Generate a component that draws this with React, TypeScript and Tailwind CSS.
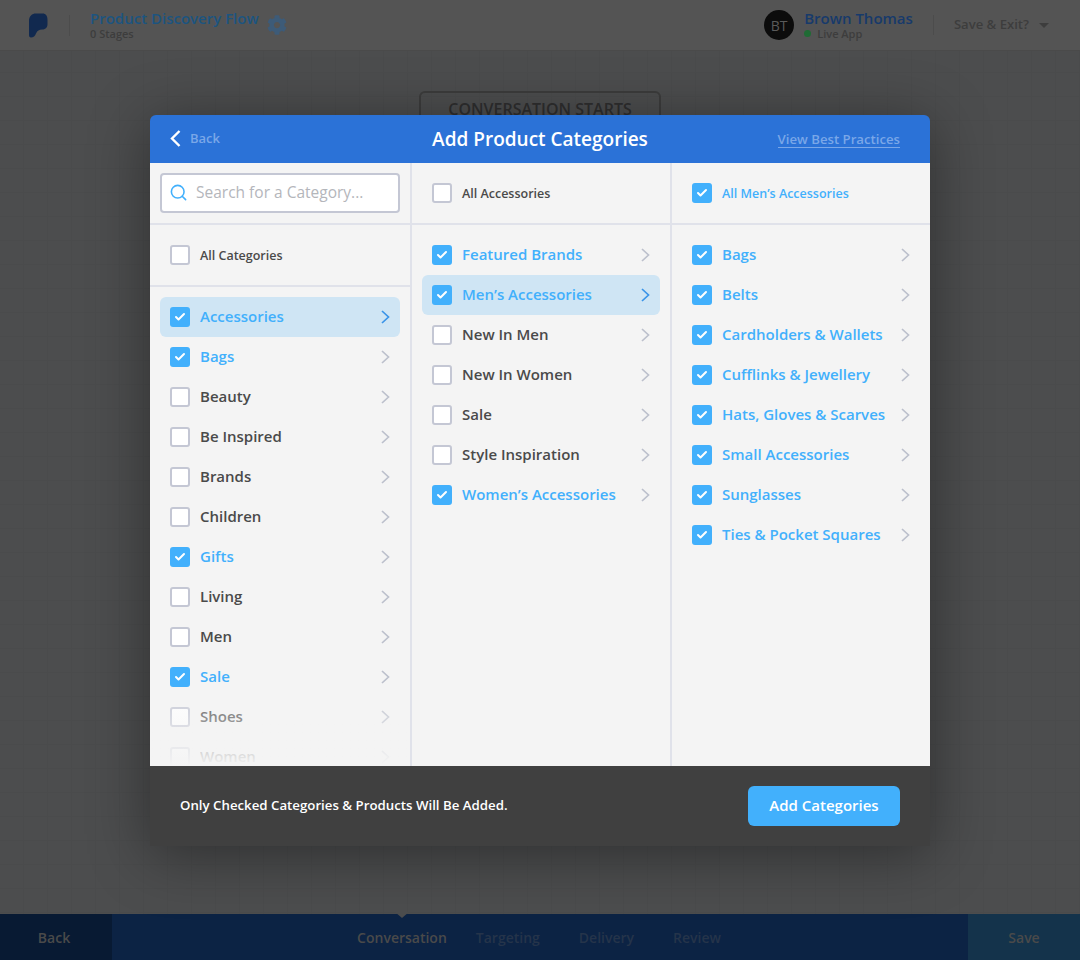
import { Check, Search } from "lucide-react";
import { FaCog } from "react-icons/fa";

const CATEGORIES = [
  { label: "Accessories", checked: true, active: true },
  { label: "Bags", checked: true },
  { label: "Beauty" },
  { label: "Be Inspired" },
  { label: "Brands" },
  { label: "Children" },
  { label: "Gifts", checked: true },
  { label: "Living" },
  { label: "Men" },
  { label: "Sale", checked: true },
  { label: "Shoes" },
  { label: "Women" },
];

const SUB_CATEGORIES = [
  { label: "Featured Brands", checked: true },
  { label: "Men’s Accessories", checked: true, active: true },
  { label: "New In Men" },
  { label: "New In Women" },
  { label: "Sale" },
  { label: "Style Inspiration" },
  { label: "Women’s Accessories", checked: true },
];

const LEAF_CATEGORIES = [
  "Bags",
  "Belts",
  "Cardholders & Wallets",
  "Cufflinks & Jewellery",
  "Hats, Gloves & Scarves",
  "Small Accessories",
  "Sunglasses",
  "Ties & Pocket Squares",
].map((label) => ({ label, checked: true }));

type Item = { label: string; checked?: boolean; active?: boolean };

function Checkbox({ checked }: { checked?: boolean }) {
  if (checked) {
    return (
      <span className="flex h-5 w-5 shrink-0 items-center justify-center rounded-[3px] bg-[#42b0fc]">
        <Check size={12} strokeWidth={4} className="text-white" />
      </span>
    );
  }
  return <span className="h-5 w-5 shrink-0 rounded-[3px] border-2 border-[#c4c7d4] bg-white" />;
}

function Row({ item }: { item: Item }) {
  return (
    <div className={`flex h-10 items-center rounded-md pl-[10px] pr-[10px] ${item.active ? "bg-[#cfe5f4]" : ""}`}>
      <Checkbox checked={item.checked} />
      <span
        className={`ml-[10px] flex-1 truncate text-[15px] font-semibold ${item.checked ? "text-[#42b0fc]" : "text-[#4a4a4a]"}`}
      >
        {item.label}
      </span>
      <svg
        width="9"
        height="14"
        viewBox="0 0 9 14"
        fill="none"
        stroke="currentColor"
        strokeWidth="1.7"
        className={item.active ? "text-[#3a94e8]" : "text-[#bcc0cc]"}
      >
        <path d="M1 1l6.500 6L1 13" />
      </svg>
    </div>
  );
}

function AllRow({ label, checked }: { label: string; checked?: boolean }) {
  return (
    <div className="flex h-[62px] shrink-0 items-center gap-[10px] border-b-2 border-[#e0e2ea] px-5">
      <Checkbox checked={checked} />
      <span className={`pt-[3px] text-[12.500px] font-semibold ${checked ? "text-[#42b0fc]" : "text-[#4a4a4a]"}`}>
        {label}
      </span>
    </div>
  );
}

export default function App() {
  return (
    <div className="relative flex h-[960px] flex-col overflow-hidden bg-[#4c4d4e] font-['Open_Sans',sans-serif]">
      {/* Page behind the modal, already dimmed */}
      <header className="flex h-[51px] shrink-0 items-center border-b border-[#4a4a4a] bg-[#545454] pl-7 pr-[31px]">
        <svg width="20" height="25" viewBox="0 0 20 25">
          <path
            d="M1 8C1 3 4 .5 8 .5h6.500C18 .5 19.500 3 19.500 7v4c0 4-2.500 5.500-5.500 5.500-3 0-4.500 1-6 4C7 23 5.500 24.500 3 24.500 1.500 24.500 1 23.500 1 22Z"
            fill="#11294f"
          />
        </svg>
        <div className="ml-[21px] h-[21px] w-px bg-[#4c4c4c]" />
        <div className="ml-5 flex flex-col">
          <span className="text-[15px] font-semibold leading-[17px] text-[#1c5480]">Product Discovery Flow</span>
          <span className="text-[11px] font-semibold leading-[13px] text-[#3d3d3d]">0 Stages</span>
        </div>
        <FaCog size={20} className="ml-2 text-[#3d5b78]" />
        <div className="ml-auto flex h-[30px] w-[30px] items-center justify-center rounded-full bg-[#0c0c0c] text-[14px] text-[#5a5a5a]">
          BT
        </div>
        <div className="ml-[10px] flex flex-col">
          <span className="text-[15px] font-semibold leading-[17px] text-[#173a6b]">Brown Thomas</span>
          <span className="flex items-center text-[11px] font-semibold leading-[14px] text-[#3d3d3d]">
            <span className="mr-[6px] h-[7px] w-[7px] rounded-full bg-[#1f6b34]" />
            Live App
          </span>
        </div>
        <div className="ml-5 h-[20px] w-px bg-[#4c4c4c]" />
        <span className="ml-5 text-[13.100px] font-semibold text-[#3d3d3d]">Save &amp; Exit?</span>
        <span className="ml-[10px] h-0 w-0 border-x-[5px] border-t-[5px] border-x-transparent border-t-[#3d3d3d]" />
      </header>

      <main className="flex-1 bg-[linear-gradient(#4a4b4c_1px,transparent_1px),linear-gradient(90deg,#4a4b4c_1px,transparent_1px)] bg-[size:24px_24px] bg-[position:-1px_-3px] pt-10">
        <div className="mx-auto h-10 w-[242px] rounded-md border-2 border-[#3c3c3c] text-center text-[16px] font-semibold leading-[33px] text-[#2e2e2e]">
          CONVERSATION STARTS
        </div>
      </main>

      <footer className="relative flex h-[46px] shrink-0 items-center bg-[#0c2344] text-[14px] font-semibold">
        <div className="flex h-full w-[112px] items-center justify-center bg-[#081a33] pr-[4px] text-[#4a4a4a]">Back</div>
        <div className="flex flex-1 items-center justify-center pr-[2px] text-[#25344a]">
          <span className="relative mr-[29px] text-[#4a4a4a]">
            Conversation
            <span className="absolute left-1/2 top-[-15px] h-0 w-0 -translate-x-1/2 border-x-[7px] border-t-[6px] border-x-transparent border-t-[#4c4d4e]" />
          </span>
          <span className="mr-[39px]">Targeting</span>
          <span className="mr-[39px]">Delivery</span>
          <span>Review</span>
        </div>
        <div className="flex h-full w-[112px] items-center justify-center bg-[#14334b] text-[#4a4a4a]">Save</div>
      </footer>

      {/* Modal */}
      <div className="absolute inset-0 flex items-center justify-center">
        <div className="flex h-[731px] w-[780px] flex-col rounded-t-md shadow-[0_8px_60px_rgba(0,0,0,0.4)]">
          <div className="relative flex h-12 shrink-0 items-center justify-center rounded-t-md bg-[#2b72d7]">
            <div className="absolute left-5 flex items-center">
              <svg width="11" height="17" viewBox="0 0 11 17" fill="none" stroke="white" strokeWidth="2.400">
                <path d="M9.500 1L2 8.500 9.500 16" />
              </svg>
              <span className="ml-[9px] text-[13px] font-semibold text-[#7aa7e8]">Back</span>
            </div>
            <span className="pt-px text-[19px] font-semibold text-white">Add Product Categories</span>
            <span className="absolute right-[30px] top-4 border-b border-[#7aa7e8] text-[13.200px] font-semibold leading-4 text-[#7aa7e8]">
              View Best Practices
            </span>
          </div>

          <div className="flex min-h-0 flex-1 bg-[#f4f4f4]">
            <div className="relative flex w-[262px] shrink-0 flex-col border-r-2 border-[#e0e2ea]">
              <div className="flex h-[62px] shrink-0 items-start border-b-2 border-[#e0e2ea] px-[10px] pt-[10px]">
                <div className="flex h-10 w-full items-center rounded-[4px] border-2 border-[#c4c7d4] bg-white pl-[7px]">
                  <Search size={19} strokeWidth={2} className="text-[#42b0fc]" />
                  <span className="ml-2 text-[15.500px] font-medium text-[#b4b6bb]">Search for a Category...</span>
                </div>
              </div>
              <AllRow label="All Categories" />
              <div className="min-h-0 flex-1 overflow-hidden px-[10px] pt-[10px]">
                {CATEGORIES.map((c) => (
                  <Row key={c.label} item={c} />
                ))}
              </div>
              <div className="pointer-events-none absolute bottom-0 left-0 right-0 h-[80px] bg-gradient-to-b from-[#f4f4f400] to-[#f4f4f4]" />
            </div>

            <div className="flex w-[260px] shrink-0 flex-col border-r-2 border-[#e0e2ea]">
              <AllRow label="All Accessories" />
              <div className="px-[10px] pt-[10px]">
                {SUB_CATEGORIES.map((c) => (
                  <Row key={c.label} item={c} />
                ))}
              </div>
            </div>

            <div className="flex flex-1 flex-col">
              <AllRow label="All Men’s Accessories" checked />
              <div className="px-[10px] pt-[10px]">
                {LEAF_CATEGORIES.map((c) => (
                  <Row key={c.label} item={c} />
                ))}
              </div>
            </div>
          </div>

          <div className="flex h-20 shrink-0 items-center justify-between bg-[#404040] px-[30px]">
            <span className="pt-px text-[13.250px] font-semibold text-white">Only Checked Categories &amp; Products Will Be Added.</span>
            <button className="h-10 w-[152px] rounded-md bg-[#42b0fc] text-[15px] font-semibold text-white">
              Add Categories
            </button>
          </div>
        </div>
      </div>
    </div>
  );
}
